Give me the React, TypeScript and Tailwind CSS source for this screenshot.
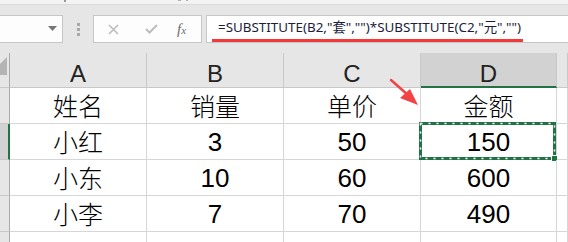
import React from "react";

const grid = "border-[#d6d6d6]";
const cjk = { fontFamily: '"Noto Sans CJK SC", "Noto Sans", sans-serif', fontWeight: 300 };
const num = { fontFamily: '"Liberation Sans", Arial, sans-serif' };

const widths = ["w-[10px]", "w-[137px]", "w-[137px]", "w-[137px]", "w-[136px]", "flex-1"];

function Row({ cells, h, selected }: { cells: (string | null)[]; h: string; selected?: boolean }) {
  return (
    <div className={`flex ${h}`}>
      <div
        className={`w-[10px] shrink-0 border-b border-[#c8c8c8] ${
          selected ? "bg-[#d2d2d2] border-r-2 border-r-[#217346]" : "bg-[#e6e6e6] border-r border-r-[#ababab]"
        }`}
      />
      {cells.map((c, i) => {
        const isNum = c !== null && /^[0-9]+$/.test(c);
        const isSel = selected && i === 3;
        return (
          <div
            key={i}
            className={`${widths[i + 1]} shrink-0 border-r border-b ${grid} flex items-center justify-center text-[25px] text-black leading-none relative`}
            style={isNum ? { ...num, fontSize: 26 } : cjk}
          >
            {c}
            {isSel && (
              <svg className="absolute left-[-2px] top-[-2px]" width="139" height="40" viewBox="0 0 139 40">
                <rect x="1.5" y="1.5" width="134" height="35" fill="none" stroke="#217346" strokeWidth="3" />
                <rect x="1.5" y="1.5" width="134" height="35" fill="none" stroke="#ffffff" strokeWidth="1.5" strokeDasharray="2 6" />
                <rect x="132.5" y="33.5" width="6" height="6" fill="#217346" stroke="#ffffff" strokeWidth="1" />
              </svg>
            )}
          </div>
        );
      })}
    </div>
  );
}

export default function App() {
  return (
    <div className="w-[568px] h-[242px] overflow-hidden bg-white relative">
      {/* top ribbon remnant */}
      <div className="h-[5px] bg-[#f3f3f3] border-b border-[#dadada] relative">
        <div className="absolute left-[64px] top-0 w-[2px] h-[2px] bg-[#9a9a9a]" />
        <div className="absolute left-[178px] top-0 w-[3px] h-[1px] bg-[#b0b0b0]" />
        <div className="absolute left-[186px] top-0 w-[2px] h-[1px] bg-[#b0b0b0]" />
      </div>
      {/* formula bar */}
      <div className="h-[48px] bg-[#e6e6e6] flex items-start pt-[10px]">
        <div className="w-[63px] h-[28px] bg-[#fdfdfd] border border-l-0 border-[#c6c6c6] relative shrink-0">
          <svg className="absolute left-[48px] top-[10px]" width="9" height="5" viewBox="0 0 9 5">
            <polygon points="0,0 9,0 4.5,5" fill="#767676" />
          </svg>
        </div>
        <div className="w-[30px] h-[28px] flex flex-col items-center justify-center gap-[2px] shrink-0">
          <div className="w-[3px] h-[3px] bg-[#a8a8a8]" />
          <div className="w-[3px] h-[3px] bg-[#a8a8a8]" />
          <div className="w-[3px] h-[3px] bg-[#a8a8a8]" />
        </div>
        <div className="w-[109px] h-[28px] bg-[#fdfdfd] border border-[#c6c6c6] flex items-center shrink-0">
          <svg className="ml-[14px]" width="11" height="11" viewBox="0 0 11 11">
            <path d="M1 1 L10 10 M10 1 L1 10" stroke="#bdbdbd" strokeWidth="1.6" />
          </svg>
          <svg className="ml-[26px]" width="13" height="10" viewBox="0 0 13 10">
            <path d="M1 5 L4.5 8.5 L12 1" stroke="#bdbdbd" strokeWidth="2" fill="none" />
          </svg>
          <span
            className="ml-[19px] text-[15px] italic text-[#6b6b6b] leading-none"
            style={{ fontFamily: '"Liberation Serif", "Times New Roman", serif' }}
          >
            f<span className="text-[11px]">x</span>
          </span>
        </div>
        <div className="ml-[4px] flex-1 h-[28px] bg-white border border-r-0 border-[#c6c6c6] relative flex items-center pl-[11px] pb-[2px]">
          <span
            className="text-[13.4px] text-[#1c1c3c] leading-none whitespace-nowrap"
            style={{ fontFamily: '"Noto Sans", "Noto Sans CJK SC", sans-serif' }}
          >
            =SUBSTITUTE(B2,"套","")*SUBSTITUTE(C2,"元","")
          </span>
          <div className="absolute left-[5px] top-[23px] w-[311px] h-[3px] bg-[#f23a3a]" />
        </div>
      </div>
      {/* grid header */}
      <div className="flex h-[35px]">
        <div className="w-[10px] shrink-0 bg-[#e6e6e6] border-r border-b border-[#ababab] border-b-[#c8c8c8] relative">
          <svg className="absolute left-0 top-[4px]" width="7" height="18" viewBox="0 0 7 18">
            <polygon points="0,7 7,0 7,18 0,18" fill="#b4b4b4" />
          </svg>
        </div>
        {["A", "B", "C", "D", ""].map((l, i) => (
          <div
            key={i}
            className={`${widths[i + 1]} shrink-0 border-r ${
              l === "D" ? "bg-[#d2d2d2] border-b-2 border-b-[#217346] border-r-[#c8c8c8]" : "bg-[#e6e6e6] border-b border-[#c8c8c8]"
            } flex items-center justify-center pt-[8px] text-[24px] text-[#222222] leading-none`}
            style={num}
          >
            {l}
          </div>
        ))}
      </div>
      <Row h="h-[36px]" cells={["姓名", "销量", "单价", "金额", null]} />
      <Row h="h-[36px]" selected cells={["小红", "3", "50", "150", null]} />
      <Row h="h-[36px]" cells={["小东", "10", "60", "600", null]} />
      <Row h="h-[36px]" cells={["小李", "7", "70", "490", null]} />
      <Row h="h-[12px]" cells={[null, null, null, null, null]} />
      {/* red arrow annotation */}
      <svg className="absolute left-[386px] top-[76px]" width="36" height="34" viewBox="0 0 36 34">
        <path d="M5 4 L22 19" stroke="#f24444" strokeWidth="2.5" strokeLinecap="round" />
        <polygon points="32,29 14,22 24,13" fill="#f24444" />
      </svg>
    </div>
  );
}
